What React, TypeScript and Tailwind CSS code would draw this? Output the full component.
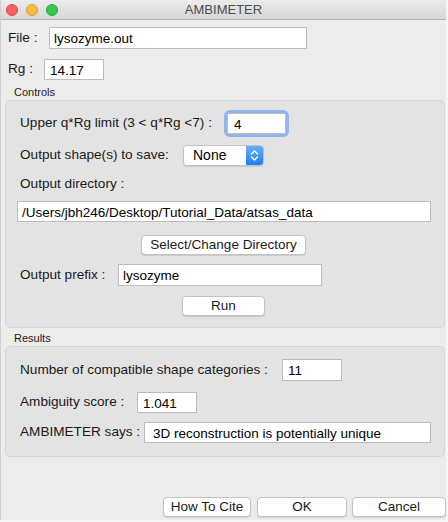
import React from "react";

const font = { fontFamily: '"Liberation Sans", Arial, sans-serif' };

function Field({ value, className }: { value: string; className: string }) {
  return (
    <div
      className={`bg-white border border-[#bcbcbc] pl-[4px] text-[13.5px] leading-none flex items-center pt-[2px] text-black whitespace-nowrap overflow-hidden ${className}`}
    >
      {value}
    </div>
  );
}

function Btn({ label, className }: { label: string; className: string }) {
  return (
    <div
      className={`bg-white border border-[#c3c3c3] rounded-[4px] shadow-[0_1px_1px_rgba(0,0,0,0.12)] text-[13.5px] flex items-center justify-center text-[#1a1a1a] ${className}`}
    >
      {label}
    </div>
  );
}

export default function App() {
  return (
    <div className="w-[448px] h-[522px] bg-[#f6f6f6]" style={font}>
      <div className="w-[446px] h-[520px] bg-[#ececec] flex flex-col border-l border-[#d0d0d0]">
        {/* title bar */}
        <div className="h-[20px] shrink-0 grid grid-cols-[1fr_auto_1fr] items-center bg-gradient-to-b from-[#ececec] to-[#d6d6d6] border-b border-[#b3b3b3]">
          <div className="flex items-center gap-[8px] pl-[5px]">
            <span className="w-[12px] h-[12px] rounded-full bg-[#fc605c] border border-[#de4a45]" />
            <span className="w-[12px] h-[12px] rounded-full bg-[#fdbc40] border border-[#dea236]" />
            <span className="w-[12px] h-[12px] rounded-full bg-[#34c84a] border border-[#27aa35]" />
          </div>
          <div className="text-[13px] text-[#4d4d4d]">AMBIMETER</div>
          <div />
        </div>

        {/* file + rg */}
        <div className="mt-[7px] h-[22px] flex items-center text-[13.6px] text-[#1a1a1a]">
          <span className="w-[48px] pl-[7px]">File :</span>
          <Field value="lysozyme.out" className="w-[258px] h-[22px]" />
        </div>
        <div className="mt-[10px] h-[21px] flex items-center text-[13.6px] text-[#1a1a1a]">
          <span className="w-[43px] pl-[7px]">Rg :</span>
          <Field value="14.17" className="w-[60px] h-[21px] pl-[5px]" />
        </div>

        {/* controls */}
        <div className="mt-[4px] h-[16px] pl-[13px] text-[11px] leading-[16px] text-[#1a1a1a]">Controls</div>
        <div className="ml-[4px] w-[440px] h-[228px] shrink-0 rounded-[5px] bg-[#e3e3e3] border border-[#d6d6d6] flex flex-col pl-[11px] text-[13.6px] text-[#1a1a1a]">
          <div className="mt-[12px] h-[21px] flex items-center">
            <span className="ml-[3px] w-[207px] whitespace-nowrap">Upper q*Rg limit (3 &lt; q*Rg &lt;7) :</span>
            <div className="rounded-[3px] shadow-[0_0_0_3px_#8fb6ee]">
              <Field value="4" className="w-[59px] h-[21px] border-[#7ea6de] pl-[6px]" />
            </div>
          </div>
          <div className="mt-[11px] h-[21px] flex items-center">
            <span className="ml-[3px] w-[163px] whitespace-nowrap">Output shape(s) to save:</span>
            <div className="w-[81px] h-[21px] flex rounded-[4px] border border-[#c2c2c2] overflow-hidden shadow-[0_1px_1px_rgba(0,0,0,0.1)]">
              <div className="flex-1 bg-white pl-[9px] flex items-center text-[14px] text-black">None</div>
              <div className="w-[17px] bg-gradient-to-b from-[#68adf9] to-[#1c7ef8] flex items-center justify-center">
                <svg width="9" height="13" viewBox="0 0 9 13" fill="none" stroke="white" strokeWidth="1.4" strokeLinecap="round" strokeLinejoin="round">
                  <path d="M1.5 5 L4.5 2 L7.5 5" />
                  <path d="M1.5 8 L4.5 11 L7.5 8" />
                </svg>
              </div>
            </div>
          </div>
          <div className="mt-[8px] h-[21px] flex items-center">
            <span className="ml-[3px]">Output directory :</span>
          </div>
          <Field value="/Users/jbh246/Desktop/Tutorial_Data/atsas_data" className="mt-[6px] w-[414px] h-[21px] pl-[3px]" />
          <Btn label="Select/Change Directory" className="mt-[13px] ml-[124px] w-[165px] h-[20px]" />
          <div className="mt-[9px] h-[22px] flex items-center">
            <span className="ml-[3px] w-[98px] whitespace-nowrap">Output prefix :</span>
            <Field value="lysozyme" className="w-[204px] h-[22px]" />
          </div>
          <Btn label="Run" className="mt-[10px] ml-[165px] w-[83px] h-[20px]" />
        </div>

        {/* results */}
        <div className="mt-[2px] h-[16px] pl-[13px] text-[11px] leading-[16px] text-[#1a1a1a]">Results</div>
        <div className="ml-[4px] w-[440px] h-[111px] shrink-0 rounded-[5px] bg-[#e3e3e3] border border-[#d6d6d6] flex flex-col pl-[14px] text-[13.6px] text-[#1a1a1a]">
          <div className="mt-[12px] h-[22px] flex items-center">
            <span className="w-[262px] whitespace-nowrap">Number of compatible shape categories :</span>
            <Field value="11" className="w-[60px] h-[22px] pl-[5px]" />
          </div>
          <div className="mt-[11px] h-[21px] flex items-center">
            <span className="w-[117px] whitespace-nowrap">Ambiguity score :</span>
            <Field value="1.041" className="w-[60px] h-[21px] pl-[5px]" />
          </div>
          <div className="mt-[9px] h-[21px] flex items-center">
            <span className="w-[124px] whitespace-nowrap">AMBIMETER says :</span>
            <Field value="3D reconstruction is potentially unique" className="w-[287px] h-[21px] pl-[8px]" />
          </div>
        </div>

        {/* bottom buttons */}
        <div className="mt-auto mb-[3px] flex pl-[162px] gap-[6px]">
          <Btn label="How To Cite" className="w-[88px] h-[20px]" />
          <Btn label="OK" className="w-[90px] h-[20px]" />
          <Btn label="Cancel" className="w-[94px] h-[20px] -ml-[1px]" />
        </div>
      </div>
    </div>
  );
}
